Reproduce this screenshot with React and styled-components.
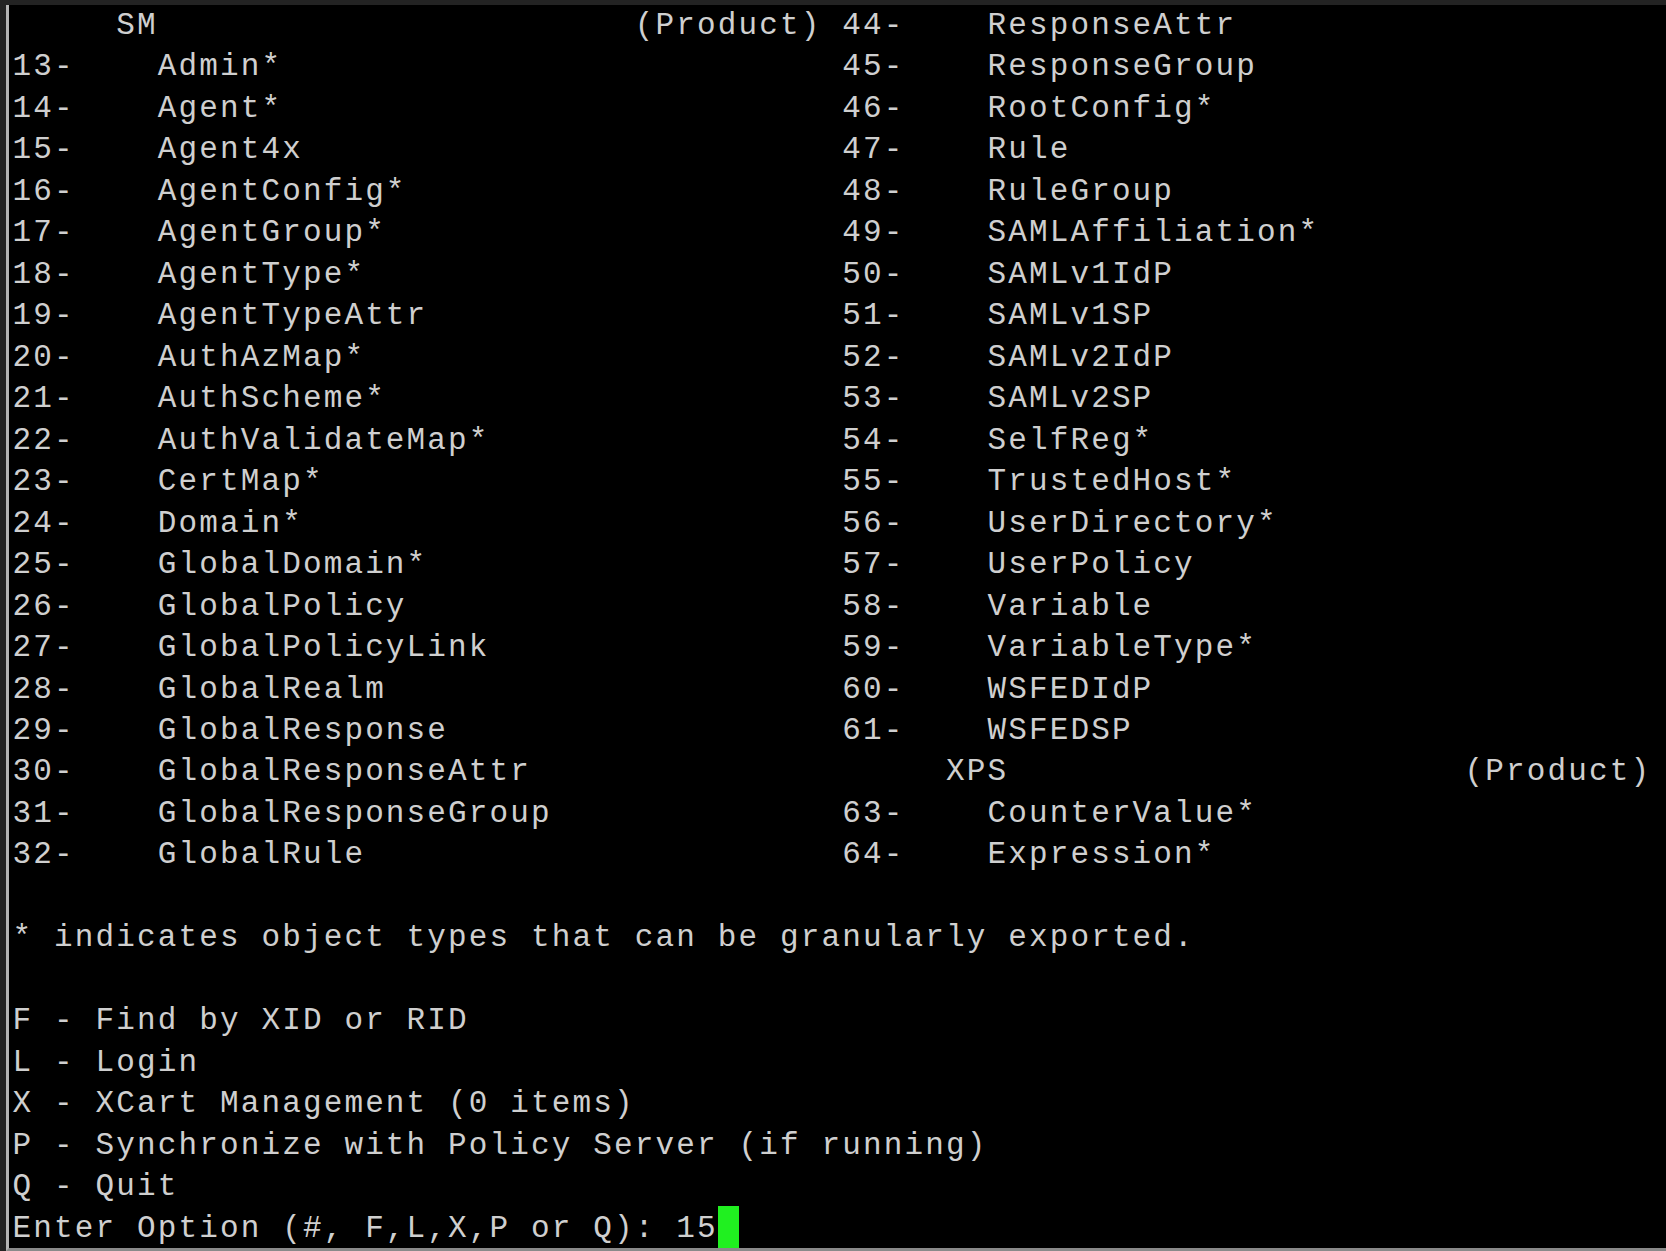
import React from 'react'
import styled, { createGlobalStyle } from 'styled-components'

const CELL = 20.74

const left = [
  ['13', 'Admin*'], ['14', 'Agent*'], ['15', 'Agent4x'], ['16', 'AgentConfig*'],
  ['17', 'AgentGroup*'], ['18', 'AgentType*'], ['19', 'AgentTypeAttr'], ['20', 'AuthAzMap*'],
  ['21', 'AuthScheme*'], ['22', 'AuthValidateMap*'], ['23', 'CertMap*'], ['24', 'Domain*'],
  ['25', 'GlobalDomain*'], ['26', 'GlobalPolicy'], ['27', 'GlobalPolicyLink'], ['28', 'GlobalRealm'],
  ['29', 'GlobalResponse'], ['30', 'GlobalResponseAttr'], ['31', 'GlobalResponseGroup'], ['32', 'GlobalRule'],
]

const right = [
  ['44', 'ResponseAttr'], ['45', 'ResponseGroup'], ['46', 'RootConfig*'], ['47', 'Rule'],
  ['48', 'RuleGroup'], ['49', 'SAMLAffiliation*'], ['50', 'SAMLv1IdP'], ['51', 'SAMLv1SP'],
  ['52', 'SAMLv2IdP'], ['53', 'SAMLv2SP'], ['54', 'SelfReg*'], ['55', 'TrustedHost*'],
  ['56', 'UserDirectory*'], ['57', 'UserPolicy'], ['58', 'Variable'], ['59', 'VariableType*'],
  ['60', 'WSFEDIdP'], ['61', 'WSFEDSP'], null, ['63', 'CounterValue*'], ['64', 'Expression*'],
]

const pad = (s, n) => s + ' '.repeat(Math.max(0, n - s.length))
const entry = (e) => pad(e[0] + '-', 7) + e[1]
const header = (name, indent) => pad(pad(' '.repeat(indent) + name, 30) + '(Product)', 40)

const buildLines = () => {
  const lines = []
  lines.push(header('SM', 5) + entry(right[0]))
  left.forEach((l, i) => {
    const r = right[i + 1]
    const rt = r ? entry(r) : pad(' '.repeat(5) + 'XPS', 30) + '(Product)'
    lines.push(pad(entry(l), 40) + rt)
  })
  lines.push('')
  lines.push('* indicates object types that can be granularly exported.')
  lines.push('')
  lines.push('F - Find by XID or RID')
  lines.push('L - Login')
  lines.push('X - XCart Management (0 items)')
  lines.push('P - Synchronize with Policy Server (if running)')
  lines.push('Q - Quit')
  return lines
}

const GlobalStyle = createGlobalStyle`
  html, body {
    margin: 0;
    padding: 0;
    background: #232323;
    overflow: hidden;
  }
`

const Window = styled.div`
  width: 1666px;
  height: 1251px;
  box-sizing: border-box;
  padding: 5px 0 0 6px;
  background: #232323;
`

const Screen = styled.div`
  height: 100%;
  box-sizing: border-box;
  background: #000;
  border-left: 3px solid #b4b4b4;
  border-bottom: 3px solid #8a8a8a;
  padding-left: 3.5px;
  overflow: hidden;
`

const Line = styled.div`
  height: 41.47px;
  line-height: 41.47px;
  white-space: pre;
  font-family: "Liberation Mono", "Courier New", monospace;
  font-size: 31px;
  letter-spacing: ${CELL - 31 * 0.6}px;
  color: #cfcfcf;
`

const Cursor = styled.span`
  display: inline-block;
  width: ${CELL}px;
  height: 42px;
  vertical-align: top;
  margin-top: -2px;
  background: #20f020;
`

export default function App() {
  const lines = buildLines()
  return (
    <>
      <GlobalStyle />
      <Window>
        <Screen>
          {lines.map((t, i) => (
            <Line key={i}>{t}</Line>
          ))}
          <Line>
            {'Enter Option (#, F,L,X,P or Q): 15'}
            <Cursor />
          </Line>
        </Screen>
      </Window>
    </>
  )
}
